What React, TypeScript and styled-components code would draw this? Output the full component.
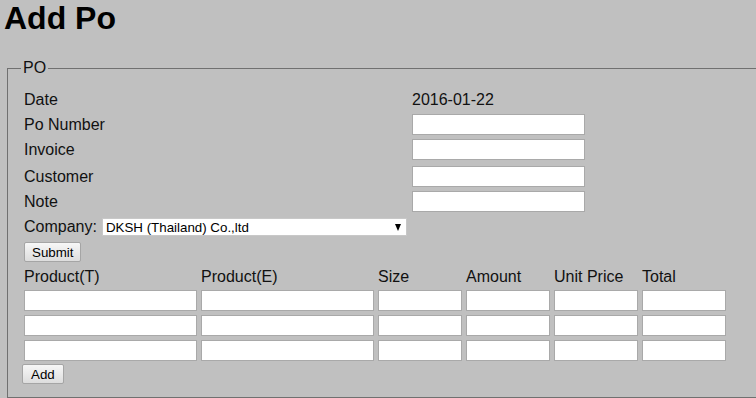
import styled, { createGlobalStyle } from 'styled-components'

const GlobalStyle = createGlobalStyle`
  html, body {
    margin: 0;
    padding: 0;
    overflow: hidden;
    background: #c0c0c0;
  }
  body {
    font-family: "Liberation Sans", Arial, sans-serif;
    color: #111;
  }
`

const Page = styled.div`
  padding: 0 0 0 4px;
`

const Title = styled.h1`
  margin: 0 0 22px 0;
  font-size: 32px;
  line-height: 37px;
  font-weight: bold;
  color: #000;
`

const Fieldset = styled.fieldset`
  margin: 0 0 0 3px;
  min-width: 800px;
  padding: 10px 0 13px 16px;
  border: 1px solid #707070;
  box-sizing: border-box;
`

const Legend = styled.legend`
  margin-left: -3px;
  padding: 0 2px;
  font-size: 16px;
  line-height: 18px;
`

const FormRows = styled.div`
  display: flex;
  flex-direction: column;
`

const FormRow = styled.div<{ $gapTop?: boolean }>`
  display: flex;
  align-items: center;
  height: 25px;
  margin-top: ${p => (p.$gapTop ? '2px' : '0')};
  font-size: 16px;
`

const Label = styled.div`
  width: 388px;
`

const Value = styled.div``

const TextInput = styled.input`
  width: 173px;
  height: 21px;
  box-sizing: border-box;
  border: 1px solid #a9a9a9;
  background: #fff;
  padding: 1px 2px;
  font-family: "Liberation Sans", Arial, sans-serif;
  font-size: 13.33px;
  outline: none;
`

const CompanyLabel = styled.span`
  margin-right: 5px;
`

const SelectWrap = styled.div`
  position: relative;
  width: 305px;
  height: 18px;
`

const Select = styled.select`
  appearance: none;
  width: 100%;
  height: 100%;
  box-sizing: border-box;
  border: 1px solid #c8c8c8;
  background: #fff;
  padding: 0 16px 0 3px;
  font-family: "Liberation Sans", Arial, sans-serif;
  font-size: 13.33px;
  color: #000;
  outline: none;
`

const Arrow = styled.svg`
  position: absolute;
  right: 6px;
  top: 6px;
  pointer-events: none;
`

const SubmitRow = styled.div`
  padding-top: 3px;
`

const Button = styled.button<{ $shift?: boolean }>`
  height: 20px;
  box-sizing: border-box;
  margin-left: ${p => (p.$shift ? '-2px' : '0')};
  padding: 0 ${p => (p.$shift ? '8px' : '7px')};
  border: 1px solid #a5a5a5;
  border-radius: 2px;
  background: linear-gradient(#f7f7f7, #dddddd);
  font-family: "Liberation Sans", Arial, sans-serif;
  font-size: 13.33px;
  color: #000;
`

const ItemGrid = styled.div`
  display: grid;
  grid-template-columns: 173px 173px 84px 84px 84px 84px;
  column-gap: 4px;
  row-gap: 4px;
  margin-top: 2px;
`

const HeaderCell = styled.div`
  box-sizing: border-box;
  height: 22px;
  padding-top: 4px;
  line-height: 18px;
  font-size: 16px;
`

const GridInput = styled(TextInput)`
  width: 100%;
`

const AddRow = styled.div`
  margin-top: 3px;
`

const fields = ['Po Number', 'Invoice', 'Customer', 'Note']
const columns = ['Product(T)', 'Product(E)', 'Size', 'Amount', 'Unit Price', 'Total']
const rows = [0, 1, 2]

export default function App (): JSX.Element {
  return (
    <Page>
      <GlobalStyle />
      <Title>Add Po</Title>
      <Fieldset>
        <Legend>PO</Legend>
        <FormRows>
          <FormRow>
            <Label>Date</Label>
            <Value>2016-01-22</Value>
          </FormRow>
          {fields.map(field => (
            <FormRow key={field} $gapTop={field === 'Customer'}>
              <Label>{field}</Label>
              <TextInput type="text" />
            </FormRow>
          ))}
          <FormRow>
            <CompanyLabel>Company:</CompanyLabel>
            <SelectWrap>
              <Select defaultValue="dksh">
                <option value="dksh">DKSH (Thailand) Co.,ltd</option>
              </Select>
              <Arrow width="6" height="7" viewBox="0 0 6 7">
                <polygon points="0,0 6,0 3,7" fill="#000" />
              </Arrow>
            </SelectWrap>
          </FormRow>
        </FormRows>
        <SubmitRow>
          <Button type="button">Submit</Button>
        </SubmitRow>
        <ItemGrid>
          {columns.map(col => (
            <HeaderCell key={col}>{col}</HeaderCell>
          ))}
          {rows.map(r =>
            columns.map(col => <GridInput key={`${r}-${col}`} type="text" />)
          )}
        </ItemGrid>
        <AddRow>
          <Button type="button" $shift>Add</Button>
        </AddRow>
      </Fieldset>
    </Page>
  )
}
